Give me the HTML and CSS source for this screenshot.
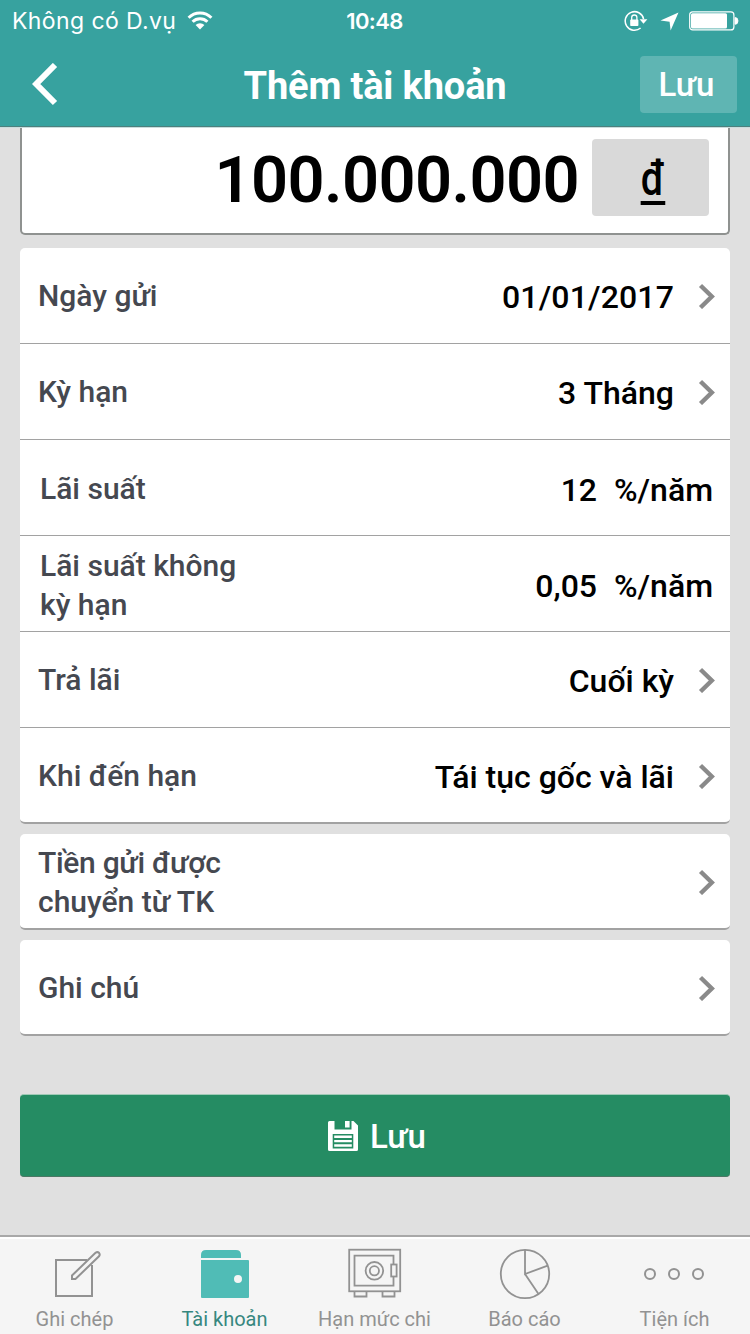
FILE: index.html
```html
<!DOCTYPE html>
<html lang="vi">
<head>
    <meta charset="UTF-8">
    <meta name="viewport" content="width=device-width, initial-scale=1.0">
    <title>Thêm tài khoản</title>
    <link rel="stylesheet" href="styles.css">
</head>
<body>
    <svg class="sprite" aria-hidden="true">
        <symbol id="arrow" viewBox="0 0 18 26">
            <path d="M2.5 2.5 L13.8 13.5 L2.5 24.5" fill="none" stroke="#8a8a8a" stroke-width="4.4"/>
        </symbol>
    </svg>

    <header>
        <div class="status">
            <div class="carrier">
                <span>Không có D.vụ</span>
                <svg width="26" height="20" viewBox="0 0 26 20">
                    <path d="M13 18.5 L8.6 14 A6.2 6.2 0 0 1 17.4 14 Z" fill="#fff"/>
                    <path d="M5.6 10.8 A10.5 10.5 0 0 1 20.4 10.8 M1.6 6.8 A16.2 16.2 0 0 1 24.4 6.8" fill="none" stroke="#fff" stroke-width="3"/>
                </svg>
            </div>
            <div class="time">10:48</div>
            <div class="indicators">
                <svg width="24" height="22" viewBox="0 0 24 22">
                    <path d="M19.6 9 A9.3 9.3 0 1 0 16.6 18" fill="none" stroke="#fff" stroke-width="1.5"/>
                    <path d="M15.6 9.3 H23.4 L19.5 13.8 Z" fill="#fff"/>
                    <rect x="6.2" y="9.6" width="8.2" height="6.4" rx="0.8" fill="#fff"/>
                    <path d="M7.7 10 V7.6 A2.6 2.6 0 0 1 12.9 7.6 V10" fill="none" stroke="#fff" stroke-width="1.3"/>
                </svg>
                <svg class="location" width="19" height="19" viewBox="0 0 19 19">
                    <path d="M18.5 0.5 L10.6 18.5 L9.6 9.8 L0.5 8.6 Z" fill="#fff"/>
                </svg>
                <svg width="50" height="20" viewBox="0 0 50 20">
                    <rect x="0.7" y="0.9" width="44.2" height="18" rx="3" fill="none" stroke="#fff" stroke-width="1.2"/>
                    <rect x="2" y="2.3" width="36" height="15.2" rx="1.5" fill="#fff"/>
                    <path d="M46 6.5 A3 3.4 0 0 1 46 13.3 Z" fill="#fff" stroke="#fff" stroke-width="0.8"/>
                </svg>
            </div>
        </div>
        <div class="navbar">
            <a class="back" href="#">
                <svg width="28" height="44" viewBox="0 0 28 44">
                    <path d="M23 2 L4.2 21 L23 40" fill="none" stroke="#fff" stroke-width="6"/>
                </svg>
            </a>
            <h1>Thêm tài khoản</h1>
            <button class="save-small">Lưu</button>
        </div>
    </header>

    <main>
        <div class="amount">
            <span class="number">100.000.000</span>
            <span class="currency"><span class="dong">đ</span></span>
        </div>

        <div class="card">
            <div class="row">
                <span class="label">Ngày gửi</span>
                <span class="value date">01/01/2017</span>
                <svg class="arrow"><use href="#arrow"/></svg>
            </div>
            <div class="row">
                <span class="label">Kỳ hạn</span>
                <span class="value">3 Tháng</span>
                <svg class="arrow"><use href="#arrow"/></svg>
            </div>
            <div class="row input">
                <span class="label">Lãi suất</span>
                <span class="value">12</span>
                <span class="unit">%/năm</span>
            </div>
            <div class="row input">
                <span class="label">Lãi suất không<br>kỳ hạn</span>
                <span class="value">0,05</span>
                <span class="unit">%/năm</span>
            </div>
            <div class="row">
                <span class="label">Trả lãi</span>
                <span class="value">Cuối kỳ</span>
                <svg class="arrow"><use href="#arrow"/></svg>
            </div>
            <div class="row">
                <span class="label">Khi đến hạn</span>
                <span class="value">Tái tục gốc và lãi</span>
                <svg class="arrow"><use href="#arrow"/></svg>
            </div>
        </div>

        <div class="card">
            <div class="row double">
                <span class="label"><span class="tight">Tiền gửi được</span><br>chuyển từ TK</span>
                <svg class="arrow"><use href="#arrow"/></svg>
            </div>
        </div>

        <div class="card">
            <div class="row">
                <span class="label">Ghi chú</span>
                <svg class="arrow"><use href="#arrow"/></svg>
            </div>
        </div>

        <button class="save">
            <svg width="30" height="30" viewBox="0 0 30 30">
                <path fill="#fff" fill-rule="evenodd" d="M1.5 0 H6.5 V8.5 H23.5 V0 H25.5 L30 4.5 V28.5 Q30 30 28.5 30 H1.5 Q0 30 0 28.5 V1.5 Q0 0 1.5 0 Z M4.7 13 V27.5 H25.3 V13 Z"/>
                <path fill="#fff" d="M17 0 H21.6 V6.5 H17 Z M6.2 14.5 H23.8 V17 H6.2 Z M6.2 19 H23.8 V21.3 H6.2 Z M6.2 23.3 H23.8 V25.8 H6.2 Z"/>
            </svg>
            <span>Lưu</span>
        </button>
    </main>

    <nav>
        <a href="#">
            <svg width="56" height="56" viewBox="0 0 56 56" fill="none" stroke="#929292" stroke-width="2">
                <path d="M40 12 H9 V48 H45 V17"/>
                <path fill="#f5f5f5" d="M25 31 V27.5 L48.5 4.8 Q50.5 3.4 52 4.8 Q53.4 6.5 52 8.3 L28.5 31 Z"/>
            </svg>
            <span>Ghi chép</span>
        </a>
        <a class="active" href="#">
            <svg width="56" height="56" viewBox="0 0 56 56" fill="#50bcb6">
                <path d="M4 10 V7 Q4 2 9 2 H39 Q44 2 44 7 V10 Z"/>
                <path fill-rule="evenodd" d="M4 12 H51 Q52 12 52 13 V49 Q52 50 51 50 H5 Q4 50 4 49 Z M41 27 A4 4 0 1 0 41 35 A4 4 0 1 0 41 27 Z"/>
            </svg>
            <span>Tài khoản</span>
        </a>
        <a href="#">
            <svg width="56" height="56" viewBox="0 0 56 56" fill="none" stroke="#929292" stroke-width="1.8">
                <rect x="2.2" y="1.7" width="51" height="41.6"/>
                <path d="M46.5 16.5 V7.7 H7.5 V37.7 H46.5 V28.5"/>
                <rect x="44.2" y="16.5" width="5.4" height="12"/>
                <circle cx="27.4" cy="22.8" r="8.8"/>
                <circle cx="27.4" cy="22.8" r="4.6"/>
                <path d="M7.5 43.5 V48.5 H19.5 V43.5 M35.5 43.5 V48.5 H47.5 V43.5"/>
            </svg>
            <span>Hạn mức chi</span>
        </a>
        <a href="#">
            <svg width="56" height="56" viewBox="0 0 56 56" fill="none" stroke="#929292" stroke-width="1.8">
                <circle cx="28" cy="26" r="24.2"/>
                <path d="M28 1.8 V26 L50.7 17.7 M28 26 L41.5 46.1"/>
            </svg>
            <span>Báo cáo</span>
        </a>
        <a href="#">
            <svg width="62" height="56" viewBox="0 0 62 56" fill="none" stroke="#929292" stroke-width="2">
                <circle cx="6" cy="26" r="5"/>
                <circle cx="30" cy="26" r="5"/>
                <circle cx="54" cy="26" r="5"/>
            </svg>
            <span>Tiện ích</span>
        </a>
    </nav>
</body>
</html>
```
FILE: styles.css
```css
* {
    box-sizing: border-box;
}

body {
    margin: 0;
    width: 750px;
    height: 1334px;
    overflow: hidden;
    display: flex;
    flex-direction: column;
    background-color: #e0e0e0;
    font-family: Roboto, sans-serif;
}

a {
    text-decoration: none;
}

svg {
    display: block;
    flex-shrink: 0;
}

.sprite {
    display: none;
}

header {
    height: 128px;
    flex-shrink: 0;
    background-color: #37a29f;
    border-bottom: 1px solid #c9dedd;
    box-shadow: inset 0 -1px 0 #4d807e;
    color: #fff;
}

.status {
    height: 42px;
    padding: 0 11px 0 12px;
    display: grid;
    grid-template-columns: 1fr auto 1fr;
    align-items: center;
    font-family: Inter, sans-serif;
    font-size: 22px;
}

.carrier {
    display: flex;
    align-items: center;
    gap: 11px;
    white-space: nowrap;
    font-size: 23px;
    letter-spacing: 0.4px;
}

.time {
    padding-right: 2px;
    font-weight: 600;
    letter-spacing: -0.6px;
}

.indicators {
    display: flex;
    align-items: center;
    justify-content: flex-end;
}

.location {
    margin: 0 10px 0 12px;
}

.navbar {
    height: 85px;
    padding: 0 13px 0 32px;
    display: grid;
    grid-template-columns: 97px 1fr 97px;
    align-items: center;
}

h1 {
    margin: 0;
    padding: 2px 19px 0 0;
    text-align: center;
    font-size: 38px;
    font-weight: 700;
    letter-spacing: -0.15px;
}

.save-small {
    height: 57px;
    padding: 0 4px 0 0;
    border: none;
    border-radius: 4px;
    background-color: #5fb5b3;
    color: #fff;
    font-family: inherit;
    font-size: 33px;
    font-weight: 500;
}

main {
    flex: 1;
    padding: 0 20px;
}

.amount {
    height: 107px;
    margin-bottom: 13px;
    padding: 11px 19px 17px;
    display: flex;
    align-items: center;
    justify-content: flex-end;
    gap: 13px;
    background-color: #fff;
    border: 2px solid #8f9290;
    border-top: none;
    border-radius: 0 0 5px 5px;
}

.number {
    padding-top: 4px;
    font-size: 65px;
    font-weight: 600;
    letter-spacing: -0.6px;
}

.currency {
    width: 117px;
    height: 77px;
    padding: 7px 0 0 5px;
    display: flex;
    align-items: center;
    justify-content: center;
    border-radius: 4px;
    background-color: #d9d9d9;
    font-size: 48px;
    font-weight: 500;
}

.dong {
    line-height: 44px;
    border-bottom: 4px solid #000;
    transform: scaleX(0.82);
}

.card {
    margin-bottom: 10px;
    background-color: #fff;
    border-bottom: 2px solid #a2a2a2;
    border-radius: 5px;
}

.row {
    height: 96px;
    padding: 1px 14px 0 18px;
    display: flex;
    align-items: center;
    border-bottom: 1px solid #a2a2a2;
}

.row:last-child {
    height: 94px;
    padding-top: 2px;
    border-bottom: none;
}

.row.input {
    padding: 2px 17px 0 20px;
}

.label {
    flex: 1;
    padding-bottom: 2px;
    color: #454850;
    font-size: 30px;
    font-weight: 500;
    line-height: 39px;
}

.input .label, .double .label {
    padding-bottom: 0;
}

.value, .unit {
    padding-top: 2px;
    color: #000;
    font-size: 32px;
    font-weight: 500;
    line-height: 40px;
}

.date {
    letter-spacing: 0.15px;
}

.unit {
    margin-left: 17px;
}

.tight {
    letter-spacing: -0.3px;
}

.arrow {
    width: 18px;
    height: 26px;
    margin-left: 24px;
}

.save {
    width: 100%;
    height: 83px;
    margin-top: 58px;
    padding: 1px 0 0 4px;
    display: flex;
    align-items: center;
    justify-content: center;
    gap: 12px;
    border: none;
    border-top: 1px solid #9fcab6;
    border-bottom: 1px solid #4c7865;
    border-radius: 4px;
    background-color: #258c63;
    color: #fff;
    font-family: inherit;
    font-size: 33px;
    font-weight: 500;
}

nav {
    height: 99px;
    flex-shrink: 0;
    display: grid;
    grid-template-columns: repeat(5, 1fr);
    background-color: #f5f5f5;
    border-top: 2px solid #a8a8a8;
    box-shadow: inset 0 2px 0 #fff;
}

nav a {
    padding-top: 11px;
    display: flex;
    flex-direction: column;
    align-items: center;
    color: #929292;
    font-size: 20px;
    line-height: 30px;
}

nav a span {
    margin-right: 1px;
}

nav .active {
    color: #37877f;
}
```
